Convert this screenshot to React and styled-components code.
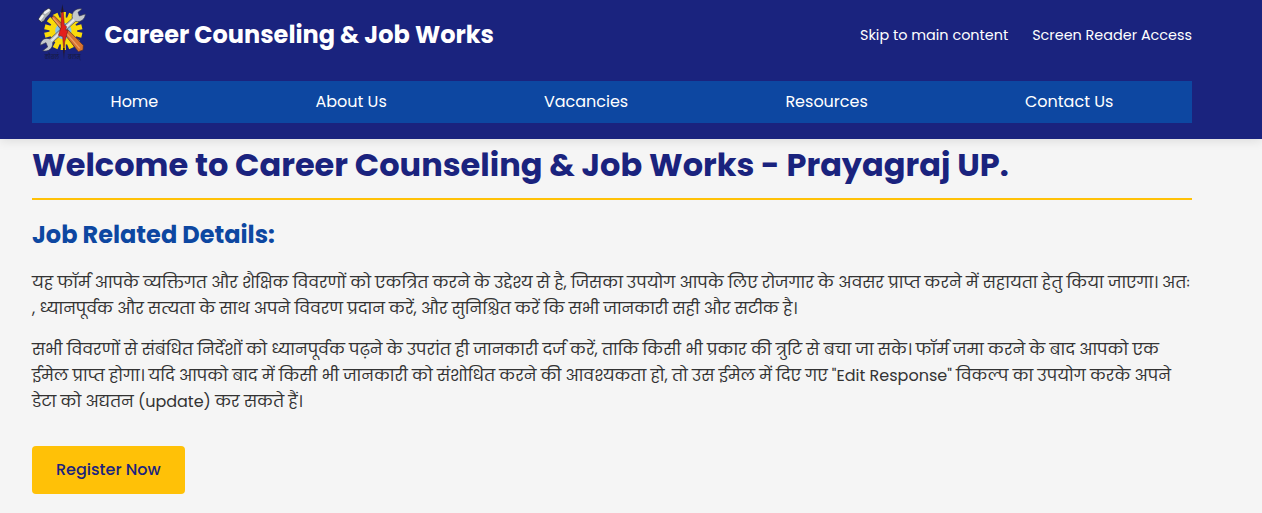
import React from "react";
import styled, { createGlobalStyle } from "styled-components";

const GlobalStyle = createGlobalStyle`
  * { box-sizing: border-box; }
  body {
    margin: 0;
    background: #f5f5f5;
    color: #333;
    font-family: "Poppins", "Noto Sans", sans-serif;
    font-size: 16px;
    line-height: 1.6;
  }
`;

const Header = styled.header`
  padding: 5px 70px 16px 32px;
  background: #1a237e;
  box-shadow: 0 2px 10px rgba(0, 0, 0, 0.1);
`;

const TopRow = styled.div`
  display: flex;
  align-items: center;
  justify-content: space-between;
  height: 60px;
  margin-bottom: 16px;
`;

const Brand = styled.div`
  display: flex;
  align-items: center;
  gap: 12.5px;
`;

const SiteName = styled.div`
  color: #fff;
  font-size: 24px;
  font-weight: 700;
  white-space: nowrap;
`;

const QuickLinks = styled.ul`
  display: flex;
  gap: 24px;
  margin: 0;
  padding: 0;
  list-style: none;
`;

const QuickLink = styled.a`
  color: #fff;
  font-size: 14.4px;
  white-space: nowrap;
`;

const Nav = styled.nav`
  display: flex;
  justify-content: space-around;
  padding: 8px 0;
  background: #0d47a1;
`;

const NavLink = styled.a`
  color: #fff;
  white-space: nowrap;
`;

const Main = styled.main`
  width: 1160px;
  margin-left: 32px;
`;

const PageTitle = styled.h1`
  margin: 0 0 16px;
  padding-bottom: 8px;
  border-bottom: 2px solid #ffc107;
  color: #1a237e;
  font-size: 32px;
  font-weight: 700;
`;

const SectionTitle = styled.h2`
  margin: 0 0 16px;
  color: #0d47a1;
  font-size: 24px;
  font-weight: 700;
`;

const Paragraph = styled.p`
  margin: 0 0 16px;
`;

const RegisterButton = styled.a`
  display: inline-block;
  margin-top: 16px;
  padding: 11.2px 24px;
  border-radius: 4px;
  background: #ffc107;
  color: #1a237e;
  font-weight: 500;
`;

const Emblem = styled.svg`
  display: block;
  width: 60px;
  height: 60px;
  overflow: visible;
`;

const teeth = Array.from({ length: 14 }, (_, i) => (i * 360) / 14);

function Logo() {
  return (
    <Emblem viewBox="0 9 180 180" aria-label="Emblem">
      <g transform="translate(94 87)">
        <circle r="33" fill="#86c5e8" stroke="#f8d90c" strokeWidth="17" />
        {teeth.map((a) => (
          <path
            key={a}
            d="M-7 -38 L-8 -57 H8 L7 -38Z"
            transform={`rotate(${a})`}
            fill="#fbdc08"
          />
        ))}
      </g>
      <path d="M58 46 L66 41 L154 130 L153 144 L139 149 Z" fill="#d9742f" stroke="#4d2c2c" strokeWidth="2" />
      <path d="M63 48 L143 139" stroke="#f0a064" strokeWidth="4" />
      <path d="M19 52 L26 40 L39 25 L51 18 L58 26 L53 36 L42 47 L36 57 L28 61Z" fill="#a9aeb3" stroke="#23243a" strokeWidth="2" />
      <path d="M25 51 L32 42 M39 32 L50 25" stroke="#f0f1f1" strokeWidth="7" strokeLinecap="round" />
      <path
        d="M121 49 C117 31 131 17 150 21 L138 31 L142 42 L160 36 C160 52 145 62 131 58 L62 121 C64 139 49 151 32 146 L47 135 L42 122 L25 130 C25 114 39 105 54 111Z"
        fill="#c4c8cc"
        stroke="#35374f"
        strokeWidth="2"
        strokeLinejoin="round"
      />
      <path d="M126 53 L58 116" stroke="#eceeef" strokeWidth="4" />
      <path
        d="M88 27 L93 20 L97 68 L104 74 L101 84 L108 85 L98 120 L96 152 L92 104 L79 100 L87 76Z"
        fill="#e3201c"
        stroke="#5b1b24"
        strokeWidth="1.5"
        strokeLinejoin="round"
      />
      <path d="M91 7 L95 30 L87 32Z M93 138 L98 138 L96 173Z" fill="#1c182a" />
      <g fill="#171a3e" fontSize="18" fontWeight="500">
        <text x="38" y="170" textLength="43" lengthAdjust="spacingAndGlyphs">कौशलं</text>
        <text x="108" y="170" textLength="38" lengthAdjust="spacingAndGlyphs">बलम्</text>
      </g>
    </Emblem>
  );
}

const quickLinks = ["Skip to main content", "Screen Reader Access"];
const links = ["Home", "About Us", "Vacancies", "Resources", "Contact Us"];

export default function App() {
  return (
    <>
      <GlobalStyle />
      <Header>
        <TopRow>
          <Brand>
            <Logo />
            <SiteName>Career Counseling &amp; Job Works</SiteName>
          </Brand>
          <QuickLinks>
            {quickLinks.map((label) => (
              <li key={label}>
                <QuickLink>{label}</QuickLink>
              </li>
            ))}
          </QuickLinks>
        </TopRow>
        <Nav>
          {links.map((label) => (
            <NavLink key={label}>{label}</NavLink>
          ))}
        </Nav>
      </Header>
      <Main>
        <PageTitle>Welcome to Career Counseling &amp; Job Works - Prayagraj UP.</PageTitle>
        <SectionTitle>Job Related Details:</SectionTitle>
        <Paragraph>
          यह फॉर्म आपके व्यक्तिगत और शैक्षिक विवरणों को एकत्रित करने के उद्देश्य से है, जिसका उपयोग आपके लिए रोजगार के अवसर प्राप्त करने में सहायता हेतु किया जाएगा। अतः , ध्यानपूर्वक और सत्यता के साथ अपने विवरण प्रदान करें, और सुनिश्चित करें कि सभी जानकारी सही और सटीक है।
        </Paragraph>
        <Paragraph>
          सभी विवरणों से संबंधित निर्देशों को ध्यानपूर्वक पढ़ने के उपरांत ही जानकारी दर्ज करें, ताकि किसी भी प्रकार की त्रुटि से बचा जा सके। फॉर्म जमा करने के बाद आपको एक ईमेल प्राप्त होगा। यदि आपको बाद में किसी भी जानकारी को संशोधित करने की आवश्यकता हो, तो उस ईमेल में दिए गए "Edit Response" विकल्प का उपयोग करके अपने डेटा को अद्यतन (update) कर सकते हैं।
        </Paragraph>
        <RegisterButton>Register Now</RegisterButton>
      </Main>
    </>
  );
}
